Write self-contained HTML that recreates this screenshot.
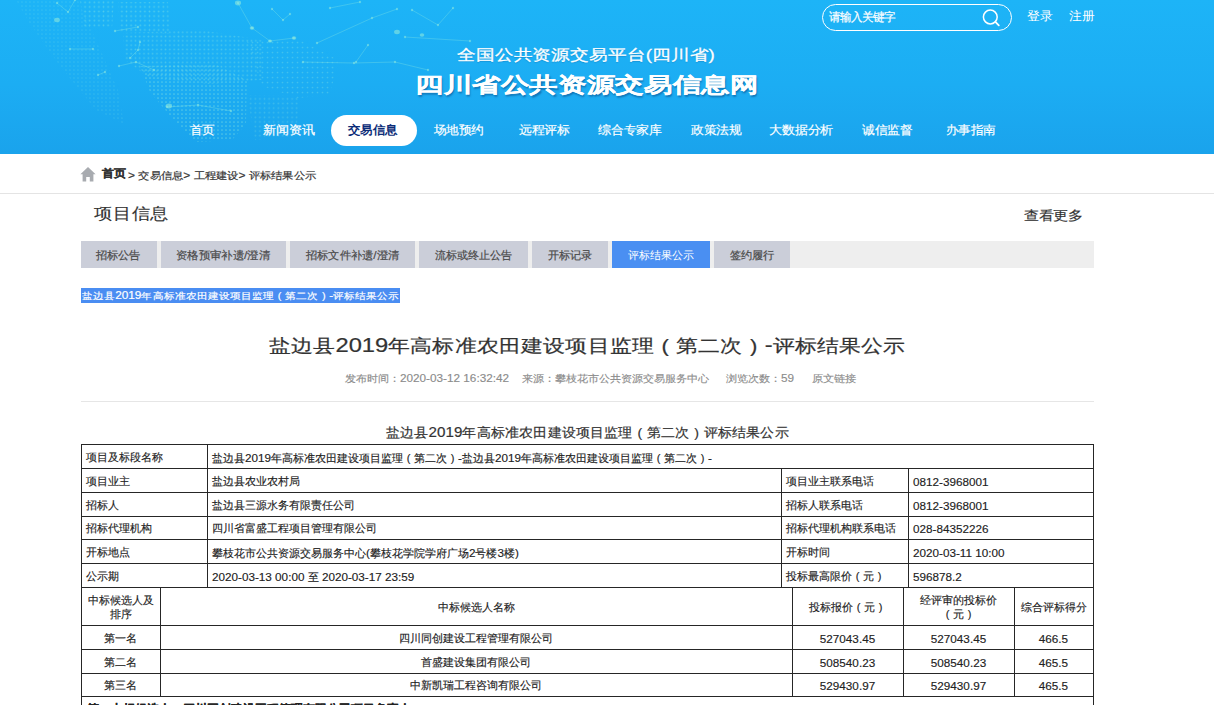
<!DOCTYPE html>
<html><head><meta charset="utf-8"><title>评标结果公示</title>
<style>
*{margin:0;padding:0;box-sizing:border-box}
html,body{width:1214px;height:705px;overflow:hidden;background:#fff}
body{position:relative;font-family:"Liberation Sans",sans-serif;color:#333}
.t{position:absolute;white-space:nowrap;line-height:1.3;transform-origin:0 0}
.c{position:absolute;white-space:nowrap;line-height:1.3;color:#222;-webkit-text-stroke:0.15px #222}
.fpl,.fpr{display:inline-block;width:1em;text-align:center}
.ln{position:absolute;background:#262626}
.bx{position:absolute}
#hdr{position:absolute;left:0;top:0;width:1214px;height:154px;background:linear-gradient(180deg,#1db4f7 0%,#1cadf3 55%,#1aa3ec 100%);overflow:hidden}
</style></head><body>

<div id="hdr">
<svg class="bx" style="left:0;top:0" width="620" height="154" viewBox="0 0 620 154">
<defs>
<pattern id="dp0" width="4.6" height="4.6" patternUnits="userSpaceOnUse"><circle cx="2.30" cy="2.30" r="0.85" fill="rgba(140,232,222,0.44)"/></pattern>
<pattern id="dp1" width="4.6" height="4.6" patternUnits="userSpaceOnUse"><circle cx="2.30" cy="2.30" r="0.85" fill="rgba(140,232,222,0.44)"/></pattern>
<pattern id="dp2" width="4.3" height="4.3" patternUnits="userSpaceOnUse"><circle cx="2.15" cy="2.15" r="0.85" fill="rgba(140,232,222,0.40)"/></pattern>
<pattern id="dp3" width="4.0" height="4.0" patternUnits="userSpaceOnUse"><circle cx="2.00" cy="2.00" r="0.85" fill="rgba(140,232,222,0.48)"/></pattern>
<pattern id="dp4" width="5.0" height="5.0" patternUnits="userSpaceOnUse"><circle cx="2.50" cy="2.50" r="0.85" fill="rgba(140,232,222,0.32)"/></pattern>
<pattern id="dp5" width="4.6" height="4.6" patternUnits="userSpaceOnUse"><circle cx="2.30" cy="2.30" r="0.85" fill="rgba(140,232,222,0.28)"/></pattern>
<pattern id="dp6" width="4.0" height="4.0" patternUnits="userSpaceOnUse"><circle cx="2.00" cy="2.00" r="0.85" fill="rgba(140,232,222,0.18)"/></pattern>
</defs>
<polygon points="80,0 114,0 112,28 84,28" fill="url(#dp0)"/>
<polygon points="118,2 168,2 170,34 120,32" fill="url(#dp1)"/>
<polygon points="123,33 200,30 263,40 262,80 210,84 150,78 125,60" fill="url(#dp2)"/>
<polygon points="140,66 215,64 247,80 246,124 232,140 196,142 172,118 150,92" fill="url(#dp3)"/>
<polygon points="247,41 300,40 338,60 330,95 298,98 262,86" fill="url(#dp4)"/>
<polygon points="247,95 300,96 296,136 255,140" fill="url(#dp5)"/>
<polygon points="16,0 78,0 96,40 118,90 124,124 96,110 60,66 30,24" fill="url(#dp6)"/>
<path d="M238.0 3.0 L252.0 28.0 L270.0 41.0 L294.0 38.0" fill="none" stroke="rgba(140,232,222,0.4)" stroke-width="0.8"/>
<circle cx="238.0" cy="3.0" r="1.2" fill="rgba(140,232,222,0.55)"/>
<circle cx="252.0" cy="28.0" r="1.2" fill="rgba(140,232,222,0.55)"/>
<circle cx="270.0" cy="41.0" r="1.2" fill="rgba(140,232,222,0.55)"/>
<circle cx="294.0" cy="38.0" r="1.2" fill="rgba(140,232,222,0.55)"/>
<path d="M272.0 9.0 L283.0 20.0 L290.0 14.0" fill="none" stroke="rgba(140,232,222,0.4)" stroke-width="0.8"/>
<circle cx="272.0" cy="9.0" r="1.2" fill="rgba(140,232,222,0.55)"/>
<circle cx="283.0" cy="20.0" r="1.2" fill="rgba(140,232,222,0.55)"/>
<circle cx="290.0" cy="14.0" r="1.2" fill="rgba(140,232,222,0.55)"/>
<path d="M330.0 8.0 L360.0 2.0" fill="none" stroke="rgba(140,232,222,0.4)" stroke-width="0.8"/>
<circle cx="330.0" cy="8.0" r="1.2" fill="rgba(140,232,222,0.55)"/>
<circle cx="360.0" cy="2.0" r="1.2" fill="rgba(140,232,222,0.55)"/>
<path d="M303.0 62.0 L354.0 63.0 L395.0 62.0 L428.0 70.0" fill="none" stroke="rgba(140,232,222,0.4)" stroke-width="0.8"/>
<circle cx="303.0" cy="62.0" r="1.2" fill="rgba(140,232,222,0.55)"/>
<circle cx="354.0" cy="63.0" r="1.2" fill="rgba(140,232,222,0.55)"/>
<circle cx="395.0" cy="62.0" r="1.2" fill="rgba(140,232,222,0.55)"/>
<circle cx="428.0" cy="70.0" r="1.2" fill="rgba(140,232,222,0.55)"/>
<path d="M368.0 45.0 L356.0 62.0" fill="none" stroke="rgba(140,232,222,0.4)" stroke-width="0.8"/>
<circle cx="368.0" cy="45.0" r="1.2" fill="rgba(140,232,222,0.55)"/>
<circle cx="356.0" cy="62.0" r="1.2" fill="rgba(140,232,222,0.55)"/>
<path d="M412.0 10.0 L438.0 25.0 L453.0 8.0" fill="none" stroke="rgba(140,232,222,0.4)" stroke-width="0.8"/>
<circle cx="412.0" cy="10.0" r="1.2" fill="rgba(140,232,222,0.55)"/>
<circle cx="438.0" cy="25.0" r="1.2" fill="rgba(140,232,222,0.55)"/>
<circle cx="453.0" cy="8.0" r="1.2" fill="rgba(140,232,222,0.55)"/>
<path d="M317.0 43.0 L372.0 18.0 L397.0 9.0" fill="none" stroke="rgba(140,232,222,0.4)" stroke-width="0.8"/>
<circle cx="317.0" cy="43.0" r="1.2" fill="rgba(140,232,222,0.55)"/>
<circle cx="372.0" cy="18.0" r="1.2" fill="rgba(140,232,222,0.55)"/>
<circle cx="397.0" cy="9.0" r="1.2" fill="rgba(140,232,222,0.55)"/>
<path d="M405.0 37.0 L470.0 41.0" fill="none" stroke="rgba(140,232,222,0.4)" stroke-width="0.8"/>
<circle cx="405.0" cy="37.0" r="1.2" fill="rgba(140,232,222,0.55)"/>
<circle cx="470.0" cy="41.0" r="1.2" fill="rgba(140,232,222,0.55)"/>
<path d="M115.0 31.0 L138.0 27.0" fill="none" stroke="rgba(140,232,222,0.4)" stroke-width="0.8"/>
<circle cx="115.0" cy="31.0" r="1.2" fill="rgba(140,232,222,0.55)"/>
<circle cx="138.0" cy="27.0" r="1.2" fill="rgba(140,232,222,0.55)"/>
<path d="M70.0 49.0 L93.0 49.0" fill="none" stroke="rgba(140,232,222,0.4)" stroke-width="0.8"/>
<circle cx="70.0" cy="49.0" r="1.2" fill="rgba(140,232,222,0.55)"/>
<circle cx="93.0" cy="49.0" r="1.2" fill="rgba(140,232,222,0.55)"/>
<path d="M119.0 66.0 L136.0 62.0 L154.0 70.0" fill="none" stroke="rgba(140,232,222,0.4)" stroke-width="0.8"/>
<circle cx="119.0" cy="66.0" r="1.2" fill="rgba(140,232,222,0.55)"/>
<circle cx="136.0" cy="62.0" r="1.2" fill="rgba(140,232,222,0.55)"/>
<circle cx="154.0" cy="70.0" r="1.2" fill="rgba(140,232,222,0.55)"/>
<path d="M167.0 107.0 L198.0 105.0 L231.0 111.0" fill="none" stroke="rgba(140,232,222,0.4)" stroke-width="0.8"/>
<circle cx="167.0" cy="107.0" r="1.2" fill="rgba(140,232,222,0.55)"/>
<circle cx="198.0" cy="105.0" r="1.2" fill="rgba(140,232,222,0.55)"/>
<circle cx="231.0" cy="111.0" r="1.2" fill="rgba(140,232,222,0.55)"/>
<path d="M57.0 3.0 L68.0 12.0 L75.0 0.0" fill="none" stroke="rgba(140,232,222,0.4)" stroke-width="0.8"/>
<circle cx="57.0" cy="3.0" r="1.2" fill="rgba(140,232,222,0.55)"/>
<circle cx="68.0" cy="12.0" r="1.2" fill="rgba(140,232,222,0.55)"/>
<circle cx="75.0" cy="0.0" r="1.2" fill="rgba(140,232,222,0.55)"/>
<path d="M98.0 75.0 L105.0 72.0" fill="none" stroke="rgba(140,232,222,0.4)" stroke-width="0.8"/>
<circle cx="98.0" cy="75.0" r="1.2" fill="rgba(140,232,222,0.55)"/>
<circle cx="105.0" cy="72.0" r="1.2" fill="rgba(140,232,222,0.55)"/>
<path d="M130.0 58.0 L138.0 50.0 L140.0 42.0" fill="none" stroke="rgba(140,232,222,0.4)" stroke-width="0.8"/>
<circle cx="130.0" cy="58.0" r="1.2" fill="rgba(140,232,222,0.55)"/>
<circle cx="138.0" cy="50.0" r="1.2" fill="rgba(140,232,222,0.55)"/>
<circle cx="140.0" cy="42.0" r="1.2" fill="rgba(140,232,222,0.55)"/>
<ellipse cx="238" cy="3" rx="3.1" ry="2.4" fill="rgba(140,232,222,0.6)"/>
<ellipse cx="252" cy="28" rx="2.3" ry="1.8" fill="rgba(140,232,222,0.6)"/>
<ellipse cx="169" cy="106" rx="3.1" ry="2.4" fill="rgba(140,232,222,0.6)"/>
<ellipse cx="397" cy="32" rx="2.9" ry="2.2" fill="rgba(140,232,222,0.6)"/>
<ellipse cx="422" cy="35" rx="2.3" ry="1.8" fill="rgba(140,232,222,0.6)"/>
<ellipse cx="294" cy="38" rx="2.3" ry="1.8" fill="rgba(140,232,222,0.6)"/>
<ellipse cx="57" cy="20" rx="2.9" ry="2.2" fill="rgba(140,232,222,0.6)"/>
<ellipse cx="270" cy="41" rx="2.1" ry="1.6" fill="rgba(140,232,222,0.6)"/>
</svg>
<div class="bx" style="left:822px;top:4px;width:190px;height:27px;border:1px solid #fff;border-radius:14px"></div>
<svg class="bx" style="left:982px;top:9px" width="20" height="18" viewBox="0 0 20 18"><circle cx="8.3" cy="8" r="6.9" fill="none" stroke="#fff" stroke-width="1.5"/><line x1="13.4" y1="12.9" x2="16.8" y2="16.4" stroke="#fff" stroke-width="1.8" stroke-linecap="round"/></svg>
<div class="bx" style="left:331px;top:115px;width:86px;height:31px;background:#fff;border-radius:16px"></div>
<div class="t" id="ph" style="left:828.60px;top:9.05px;font-size:11.000px;color:#fff;font-weight:normal;transform:scale(1.0080,1.0463);-webkit-text-stroke:0.2px #fff;">请输入关键字</div>
<div class="t" id="login" style="left:1027.40px;top:8.75px;font-size:13.000px;color:#fff;font-weight:normal;transform:scale(1.0000,0.9231);">登录</div>
<div class="t" id="reg" style="left:1069.00px;top:8.75px;font-size:13.000px;color:#fff;font-weight:normal;transform:scale(0.9775,0.9231);">注册</div>
<div class="t" id="sub" style="left:456.80px;top:45.65px;font-size:19.000px;color:#fff;font-weight:normal;transform:scale(0.9931,0.8011);-webkit-text-stroke:0.35px #fff;text-shadow:0 1px 1px rgba(0,60,120,.25);">全国公共资源交易平台(四川省)</div>
<div class="t" id="main" style="left:415.20px;top:71.60px;font-size:28.000px;color:#fff;font-weight:bold;transform:scale(1.0223,0.7557);text-shadow:1px 2px 2px rgba(0,50,110,.45);-webkit-text-stroke:0.4px #fff;">四川省公共资源交易信息网</div>
<div class="t" id="nav0" style="left:190.40px;top:122.55px;font-size:13.000px;color:#fff;font-weight:normal;transform:scale(0.9477,0.9103);-webkit-text-stroke:0.2px #fff;">首页</div>
<div class="t" id="nav1" style="left:263.00px;top:122.55px;font-size:13.000px;color:#fff;font-weight:normal;transform:scale(0.9889,0.9103);-webkit-text-stroke:0.2px #fff;">新闻资讯</div>
<div class="t" id="nav2" style="left:348.40px;top:122.55px;font-size:13.000px;color:#0c2d78;font-weight:bold;transform:scale(0.9503,0.9157);">交易信息</div>
<div class="t" id="nav3" style="left:434.20px;top:122.55px;font-size:13.000px;color:#fff;font-weight:normal;transform:scale(0.9579,0.9103);-webkit-text-stroke:0.2px #fff;">场地预约</div>
<div class="t" id="nav4" style="left:519.00px;top:122.55px;font-size:13.000px;color:#fff;font-weight:normal;transform:scale(0.9778,0.9103);-webkit-text-stroke:0.2px #fff;">远程评标</div>
<div class="t" id="nav5" style="left:598.20px;top:122.55px;font-size:13.000px;color:#fff;font-weight:normal;transform:scale(0.9848,0.9103);-webkit-text-stroke:0.2px #fff;">综合专家库</div>
<div class="t" id="nav6" style="left:691.00px;top:122.55px;font-size:13.000px;color:#fff;font-weight:normal;transform:scale(0.9694,0.9103);-webkit-text-stroke:0.2px #fff;">政策法规</div>
<div class="t" id="nav7" style="left:769.00px;top:122.55px;font-size:13.000px;color:#fff;font-weight:normal;transform:scale(0.9880,0.9103);-webkit-text-stroke:0.2px #fff;">大数据分析</div>
<div class="t" id="nav8" style="left:861.60px;top:122.55px;font-size:13.000px;color:#fff;font-weight:normal;transform:scale(0.9734,0.9103);-webkit-text-stroke:0.2px #fff;">诚信监督</div>
<div class="t" id="nav9" style="left:946.00px;top:122.55px;font-size:13.000px;color:#fff;font-weight:normal;transform:scale(0.9530,0.9103);-webkit-text-stroke:0.2px #fff;">办事指南</div>
</div>
<svg class="bx" style="left:80px;top:166px" width="16" height="16" viewBox="0 0 16 16"><path d="M8 1 L15.6 8.2 L13.4 8.2 L13.4 15.6 L9.8 15.6 L9.8 11 L6.2 11 L6.2 15.6 L2.6 15.6 L2.6 8.2 L0.4 8.2 Z" fill="#a8abb0"/></svg>
<div class="t" id="bc1" style="left:101.80px;top:166.80px;font-size:12.000px;color:#333;font-weight:bold;transform:scale(1.0189,0.9358);-webkit-text-stroke:0.25px #333;">首页</div>
<div class="t" id="bc2" style="left:127.50px;top:168.25px;font-size:11.000px;color:#333;font-weight:normal;transform:scale(1.0195,0.8971);-webkit-text-stroke:0.2px #333;"><span style="font-size:1.070em">&gt; </span>交易信息<span style="font-size:1.070em">&gt; </span>工程建设<span style="font-size:1.070em">&gt; </span>评标结果公示</div>
<div class="bx" style="left:0;top:193px;width:1214px;height:1px;background:#e4e4e4"></div>
<div class="t" id="xmxx" style="left:93.60px;top:203.45px;font-size:19.000px;color:#333;font-weight:normal;transform:scale(0.9871,0.8670);-webkit-text-stroke:0.15px #333;">项目信息</div>
<div class="t" id="more" style="left:1024.40px;top:207.30px;font-size:14.000px;color:#333;font-weight:normal;transform:scale(1.0367,0.8952);-webkit-text-stroke:0.2px #333;">查看更多</div>
<div class="bx" style="left:81px;top:241px;width:1013px;height:27px;background:#eeeeee"></div>
<div class="bx" style="left:81px;top:241px;width:76px;height:27px;background:#cbced9"></div>
<div class="bx" style="left:161px;top:241px;width:125px;height:27px;background:#cbced9"></div>
<div class="bx" style="left:290px;top:241px;width:125px;height:27px;background:#cbced9"></div>
<div class="bx" style="left:419px;top:241px;width:109px;height:27px;background:#cbced9"></div>
<div class="bx" style="left:532px;top:241px;width:76px;height:27px;background:#cbced9"></div>
<div class="bx" style="left:612px;top:241px;width:98px;height:27px;background:#4a8ff2"></div>
<div class="bx" style="left:714px;top:241px;width:76px;height:27px;background:#cbced9"></div>
<div class="t" id="tab0" style="left:96.00px;top:247.75px;font-size:11.000px;color:#4a4a4a;font-weight:normal;transform:scale(1.0143,0.9900);-webkit-text-stroke:0.2px #4a4a4a;">招标公告</div>
<div class="t" id="tab1" style="left:176.00px;top:246.75px;font-size:11.000px;color:#4a4a4a;font-weight:normal;transform:scale(1.0289,0.9900);-webkit-text-stroke:0.2px #4a4a4a;">资格预审补遗<span style="font-size:1.070em">/</span>澄清</div>
<div class="t" id="tab2" style="left:306.00px;top:246.75px;font-size:11.000px;color:#4a4a4a;font-weight:normal;transform:scale(1.0177,0.9900);-webkit-text-stroke:0.2px #4a4a4a;">招标文件补遗<span style="font-size:1.070em">/</span>澄清</div>
<div class="t" id="tab3" style="left:435.00px;top:247.75px;font-size:11.000px;color:#4a4a4a;font-weight:normal;transform:scale(0.9975,0.9900);-webkit-text-stroke:0.2px #4a4a4a;">流标或终止公告</div>
<div class="t" id="tab4" style="left:548.00px;top:247.75px;font-size:11.000px;color:#4a4a4a;font-weight:normal;transform:scale(1.0053,0.9900);-webkit-text-stroke:0.2px #4a4a4a;">开标记录</div>
<div class="t" id="tab5" style="left:628.00px;top:247.75px;font-size:11.000px;color:#fff;font-weight:normal;transform:scale(0.9912,0.9900);">评标结果公示</div>
<div class="t" id="tab6" style="left:730.00px;top:247.75px;font-size:11.000px;color:#4a4a4a;font-weight:normal;transform:scale(1.0094,0.9900);-webkit-text-stroke:0.2px #4a4a4a;">签约履行</div>
<div class="bx" style="left:81px;top:288px;width:319px;height:15px;background:#4a8df2"></div>
<div class="t" id="sel" style="left:81.50px;top:288.65px;font-size:11.000px;color:#fff;font-weight:normal;transform:scale(1.0045,0.8548);-webkit-text-stroke:0.2px #fff;">盐边县<span style="font-size:1.070em">2019</span>年高标准农田建设项目监理<span class="fpl">(</span>第二次<span class="fpr">)</span><span style="font-size:1.070em">-</span>评标结果公示</div>
<div class="t" id="title" style="left:269.00px;top:332.90px;font-size:22.000px;color:#333;font-weight:normal;transform:scale(1.0070,0.8295);-webkit-text-stroke:0.25px #333;">盐边县<span style="font-size:1.070em">2019</span>年高标准农田建设项目监理<span class="fpl">(</span>第二次<span class="fpr">)</span><span style="font-size:1.070em">-</span>评标结果公示</div>
<div class="t" id="meta1" style="left:345.00px;top:371.25px;font-size:11.000px;color:#8c8c8c;font-weight:normal;transform:scale(0.9989,0.9000);-webkit-text-stroke:0.15px #8c8c8c;">发布时间：<span style="font-size:1.070em">2020-03-12 16:32:42</span></div>
<div class="t" id="meta2" style="left:522.00px;top:372.25px;font-size:11.000px;color:#8c8c8c;font-weight:normal;transform:scale(1.0021,0.9000);-webkit-text-stroke:0.15px #8c8c8c;">来源：攀枝花市公共资源交易服务中心</div>
<div class="t" id="meta3" style="left:726.00px;top:371.25px;font-size:11.000px;color:#8c8c8c;font-weight:normal;transform:scale(1.0002,0.9000);-webkit-text-stroke:0.15px #8c8c8c;">浏览次数：<span style="font-size:1.070em">59</span></div>
<div class="t" id="meta4" style="left:812.00px;top:372.25px;font-size:11.000px;color:#8c8c8c;font-weight:normal;transform:scale(1.0143,0.9000);-webkit-text-stroke:0.15px #8c8c8c;">原文链接</div>
<div class="bx" style="left:81px;top:401px;width:1013px;height:1px;background:#e6e6e6"></div>
<div class="t" id="cap" style="left:385.60px;top:422.70px;font-size:14.000px;color:#333;font-weight:normal;transform:scale(1.0139,0.9402);-webkit-text-stroke:0.2px #333;">盐边县<span style="font-size:1.070em">2019</span>年高标准农田建设项目监理<span class="fpl">(</span>第二次<span class="fpr">)</span>评标结果公示</div>
<div class="ln" style="left:81px;top:444px;width:1013px;height:1px"></div>
<div class="ln" style="left:81px;top:468px;width:1013px;height:1px"></div>
<div class="ln" style="left:81px;top:492px;width:1013px;height:1px"></div>
<div class="ln" style="left:81px;top:516px;width:1013px;height:1px"></div>
<div class="ln" style="left:81px;top:539px;width:1013px;height:1px"></div>
<div class="ln" style="left:81px;top:563px;width:1013px;height:1px"></div>
<div class="ln" style="left:81px;top:587px;width:1013px;height:1px"></div>
<div class="ln" style="left:81px;top:444px;width:1px;height:262px"></div>
<div class="ln" style="left:1093px;top:444px;width:1px;height:262px"></div>
<div class="ln" style="left:207px;top:444px;width:1px;height:144px"></div>
<div class="ln" style="left:781px;top:468px;width:1px;height:120px"></div>
<div class="ln" style="left:908px;top:468px;width:1px;height:120px"></div>
<div class="ln" style="left:81px;top:625px;width:1013px;height:1px"></div>
<div class="ln" style="left:81px;top:649px;width:1013px;height:1px"></div>
<div class="ln" style="left:81px;top:673px;width:1013px;height:1px"></div>
<div class="ln" style="left:81px;top:696px;width:1013px;height:1px"></div>
<div class="ln" style="left:160px;top:587px;width:1px;height:110px"></div>
<div class="ln" style="left:792px;top:587px;width:1px;height:110px"></div>
<div class="ln" style="left:903px;top:587px;width:1px;height:110px"></div>
<div class="ln" style="left:1014px;top:587px;width:1px;height:110px"></div>
<div class="c" style="left:86.0px;top:449.65px;font-size:11px;">项目及标段名称</div>
<div class="c" style="left:212.0px;top:449.65px;font-size:11px;">盐边县<span style="font-size:1.065em">2019</span>年高标准农田建设项目监理<span class="fpl">(</span>第二次<span class="fpr">)</span><span style="font-size:1.065em">-</span>盐边县<span style="font-size:1.065em">2019</span>年高标准农田建设项目监理<span class="fpl">(</span>第二次<span class="fpr">)</span><span style="font-size:1.065em">-</span></div>
<div class="c" style="left:86.0px;top:473.65px;font-size:11px;">项目业主</div>
<div class="c" style="left:212.0px;top:473.65px;font-size:11px;">盐边县农业农村局</div>
<div class="c" style="left:786.0px;top:473.65px;font-size:11px;">项目业主联系电话</div>
<div class="c" style="left:913.0px;top:473.65px;font-size:11px;"><span style="font-size:1.065em">0812-3968001</span></div>
<div class="c" style="left:86.0px;top:497.65px;font-size:11px;">招标人</div>
<div class="c" style="left:212.0px;top:497.65px;font-size:11px;">盐边县三源水务有限责任公司</div>
<div class="c" style="left:786.0px;top:497.65px;font-size:11px;">招标人联系电话</div>
<div class="c" style="left:913.0px;top:497.65px;font-size:11px;"><span style="font-size:1.065em">0812-3968001</span></div>
<div class="c" style="left:86.0px;top:521.15px;font-size:11px;">招标代理机构</div>
<div class="c" style="left:212.0px;top:521.15px;font-size:11px;">四川省富盛工程项目管理有限公司</div>
<div class="c" style="left:786.0px;top:521.15px;font-size:11px;">招标代理机构联系电话</div>
<div class="c" style="left:913.0px;top:521.15px;font-size:11px;"><span style="font-size:1.065em">028-84352226</span></div>
<div class="c" style="left:86.0px;top:544.65px;font-size:11px;">开标地点</div>
<div class="c" style="left:212.0px;top:544.65px;font-size:11px;">攀枝花市公共资源交易服务中心<span style="font-size:1.065em">(</span>攀枝花学院学府广场<span style="font-size:1.065em">2</span>号楼<span style="font-size:1.065em">3</span>楼<span style="font-size:1.065em">)</span></div>
<div class="c" style="left:786.0px;top:544.65px;font-size:11px;">开标时间</div>
<div class="c" style="left:913.0px;top:544.65px;font-size:11px;"><span style="font-size:1.065em">2020-03-11 10:00</span></div>
<div class="c" style="left:86.0px;top:568.65px;font-size:11px;">公示期</div>
<div class="c" style="left:212.0px;top:568.65px;font-size:11px;"><span style="font-size:1.065em">2020-03-13 00:00 </span>至<span style="font-size:1.065em"> 2020-03-17 23:59</span></div>
<div class="c" style="left:786.0px;top:568.65px;font-size:11px;">投标最高限价<span class="fpl">(</span>元<span class="fpr">)</span></div>
<div class="c" style="left:913.0px;top:568.65px;font-size:11px;"><span style="font-size:1.065em">596878.2</span></div>
<div class="c" style="left:81.0px;top:592.65px;font-size:11px;width:79px;text-align:center;">中标候选人及</div><div class="c" style="left:81.0px;top:607.05px;font-size:11px;width:79px;text-align:center;">排序</div>
<div class="c" style="left:160.0px;top:599.65px;font-size:11px;width:632px;text-align:center;">中标候选人名称</div>
<div class="c" style="left:792.0px;top:599.65px;font-size:11px;width:111px;text-align:center;">投标报价<span class="fpl">(</span>元<span class="fpr">)</span></div>
<div class="c" style="left:903.0px;top:592.65px;font-size:11px;width:111px;text-align:center;">经评审的投标价</div><div class="c" style="left:903.0px;top:607.05px;font-size:11px;width:111px;text-align:center;"><span class="fpl">(</span>元<span class="fpr">)</span></div>
<div class="c" style="left:1014.0px;top:599.65px;font-size:11px;width:79px;text-align:center;">综合评标得分</div>
<div class="c" style="left:81.0px;top:630.65px;font-size:11px;width:79px;text-align:center;">第一名</div>
<div class="c" style="left:160.0px;top:630.65px;font-size:11px;width:632px;text-align:center;">四川同创建设工程管理有限公司</div>
<div class="c" style="left:792.0px;top:630.65px;font-size:11px;width:111px;text-align:center;"><span style="font-size:1.065em">527043.45</span></div>
<div class="c" style="left:903.0px;top:630.65px;font-size:11px;width:111px;text-align:center;"><span style="font-size:1.065em">527043.45</span></div>
<div class="c" style="left:1014.0px;top:630.65px;font-size:11px;width:79px;text-align:center;"><span style="font-size:1.065em">466.5</span></div>
<div class="c" style="left:81.0px;top:654.65px;font-size:11px;width:79px;text-align:center;">第二名</div>
<div class="c" style="left:160.0px;top:654.65px;font-size:11px;width:632px;text-align:center;">首盛建设集团有限公司</div>
<div class="c" style="left:792.0px;top:654.65px;font-size:11px;width:111px;text-align:center;"><span style="font-size:1.065em">508540.23</span></div>
<div class="c" style="left:903.0px;top:654.65px;font-size:11px;width:111px;text-align:center;"><span style="font-size:1.065em">508540.23</span></div>
<div class="c" style="left:1014.0px;top:654.65px;font-size:11px;width:79px;text-align:center;"><span style="font-size:1.065em">465.5</span></div>
<div class="c" style="left:81.0px;top:678.15px;font-size:11px;width:79px;text-align:center;">第三名</div>
<div class="c" style="left:160.0px;top:678.15px;font-size:11px;width:632px;text-align:center;">中新凯瑞工程咨询有限公司</div>
<div class="c" style="left:792.0px;top:678.15px;font-size:11px;width:111px;text-align:center;"><span style="font-size:1.065em">529430.97</span></div>
<div class="c" style="left:903.0px;top:678.15px;font-size:11px;width:111px;text-align:center;"><span style="font-size:1.065em">529430.97</span></div>
<div class="c" style="left:1014.0px;top:678.15px;font-size:11px;width:79px;text-align:center;"><span style="font-size:1.065em">465.5</span></div>
<div class="c" style="left:87px;top:701.65px;font-size:12px;font-weight:bold">第一中标候选人：四川同创建设工程管理有限公司项目负责人</div>
</body></html>
